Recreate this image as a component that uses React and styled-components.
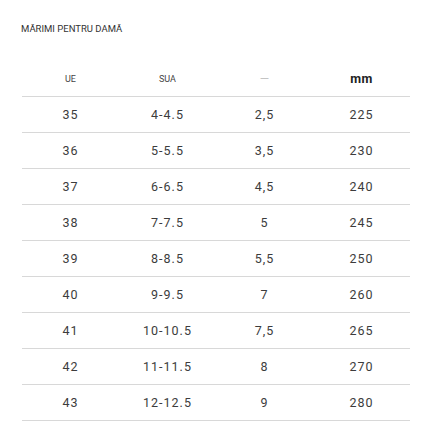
import React from "react";
import styled, { createGlobalStyle } from "styled-components";

const GlobalStyle = createGlobalStyle`
  body {
    margin: 0;
    background: #fff;
    font-family: Roboto, "Liberation Sans", sans-serif;
  }
`;

const Page = styled.div`
  padding: 23px 14px 0 21px;
`;

const Title = styled.div`
  font-size: 9.5px;
  color: #333;
  text-transform: uppercase;
  height: 11px;
  line-height: 11px;
`;

const Table = styled.div`
  margin-top: 27px;
  margin-left: 1px;
  width: 388px;
`;

const Row = styled.div`
  display: grid;
  grid-template-columns: repeat(4, 1fr);
  height: 36px;
  align-items: center;
  border-bottom: 1px solid #d8d8d8;
  box-sizing: border-box;
`;

const Cell = styled.div`
  text-align: center;
  font-size: 12.5px;
  letter-spacing: 1px;
  color: #3c3c3c;
`;

const HeadCell = styled.div`
  text-align: center;
  font-size: ${(props) => (props.bold ? "12.5px" : props.faint ? "12px" : "9px")};
  font-weight: ${(props) => (props.bold ? 700 : 400)};
  color: ${(props) => (props.bold ? "#222" : props.faint ? "#c4c4c4" : "#444")};
  letter-spacing: ${(props) => (props.bold ? "0.5px" : "0")};
`;

const rows = [
  ["35", "4-4.5", "2,5", "225"],
  ["36", "5-5.5", "3,5", "230"],
  ["37", "6-6.5", "4,5", "240"],
  ["38", "7-7.5", "5", "245"],
  ["39", "8-8.5", "5,5", "250"],
  ["40", "9-9.5", "7", "260"],
  ["41", "10-10.5", "7,5", "265"],
  ["42", "11-11.5", "8", "270"],
  ["43", "12-12.5", "9", "280"],
];

export default function App() {
  return (
    <>
      <GlobalStyle />
      <Page>
        <Title>Mărimi pentru damă</Title>
        <Table>
          <Row>
            <HeadCell>UE</HeadCell>
            <HeadCell>SUA</HeadCell>
            <HeadCell faint>—</HeadCell>
            <HeadCell bold>mm</HeadCell>
          </Row>
          {rows.map((r) => (
            <Row key={r[0]}>
              {r.map((v, i) => (
                <Cell key={i}>{v}</Cell>
              ))}
            </Row>
          ))}
        </Table>
      </Page>
    </>
  );
}
